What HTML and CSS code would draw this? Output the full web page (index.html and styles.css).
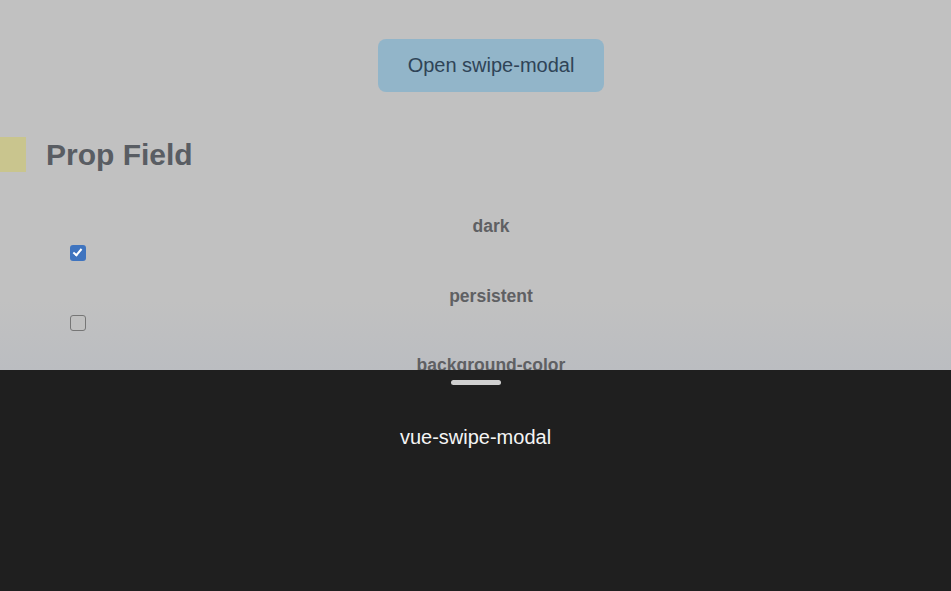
FILE: index.html
```html
<!DOCTYPE html>
<html>
<head>
<meta charset="utf-8">
<link rel="stylesheet" href="styles.css">
</head>
<body>
<div class="page">
  <div class="top">
    <button class="open-btn">Open swipe-modal</button>
  </div>
  <div class="heading">
    <span class="mark"></span>
    <h2 class="title">Prop Field</h2>
  </div>
  <div class="fields">
    <div class="field">
      <div class="label">dark</div>
      <input type="checkbox" class="check" checked>
    </div>
    <div class="field">
      <div class="label">persistent</div>
      <input type="checkbox" class="check">
    </div>
    <div class="field">
      <div class="label">background-color</div>
    </div>
  </div>
</div>
<div class="modal">
  <div class="handle"></div>
  <div class="modal-title">vue-swipe-modal</div>
</div>
</body>
</html>
```
FILE: styles.css
```css
html, body {
  margin: 0;
  padding: 0;
  height: 100%;
  overflow: hidden;
}
body {
  background: linear-gradient(to bottom, #c1c1c1 0, #c1c1c1 300px, #bbbdc1 370px, #bbbdc1 100%);
  font-family: "Liberation Sans", Arial, sans-serif;
}
.page {
  padding-left: 31px;
}
.top {
  display: flex;
  justify-content: center;
  padding-top: 39px;
}
.open-btn {
  width: 226px;
  height: 53px;
  border: none;
  border-radius: 8px;
  background: #92b5c9;
  color: #2f4457;
  font-family: "Liberation Sans", Arial, sans-serif;
  font-size: 20px;
  padding: 0;
}
.heading {
  display: flex;
  align-items: center;
  margin-left: -31px;
  margin-top: 45px;
  gap: 20px;
  height: 35px;
}
.mark {
  width: 26px;
  height: 35px;
  background: #c9c58e;
}
.title {
  margin: 0;
  font-size: 30px;
  font-weight: bold;
  color: #595d63;
}
.fields {
  margin-top: 34px;
  display: flex;
  flex-direction: column;
}
.field {
  height: 69.5px;
  display: flex;
  flex-direction: column;
  padding-top: 10px;
  box-sizing: border-box;
}
.label {
  text-align: center;
  font-size: 17.5px;
  font-weight: bold;
  color: #5f6063;
  line-height: 20px;
}
.check {
  appearance: none;
  -webkit-appearance: none;
  position: relative;
  margin: 9px 0 0 39px;
  width: 16px;
  height: 16px;
  box-sizing: border-box;
  border: 1px solid #767676;
  border-radius: 3px;
  background: #c0c0c0;
}
.check:checked {
  border: none;
  background: #3f74bf;
}
.check:checked::after {
  content: "";
  position: absolute;
  left: 5px;
  top: 2px;
  width: 3px;
  height: 7px;
  border: solid #ffffff;
  border-width: 0 2px 2px 0;
  transform: rotate(40deg);
}
.modal {
  position: fixed;
  left: 0;
  right: 0;
  bottom: 0;
  height: 221px;
  background: #1f1f1f;
  display: flex;
  flex-direction: column;
  align-items: center;
}
.handle {
  margin-top: 10px;
  width: 50px;
  height: 5px;
  border-radius: 3px;
  background: #d0d0d0;
}
.modal-title {
  margin-top: 41px;
  color: #f5f5f5;
  font-size: 20px;
  line-height: 22px;
}
```
